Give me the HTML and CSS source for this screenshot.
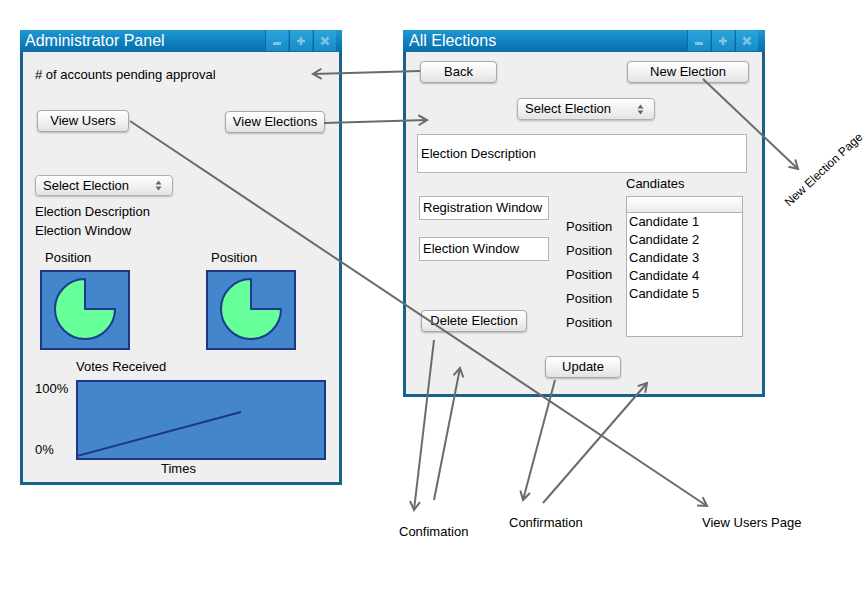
FILE: index.html
```html
<!DOCTYPE html>
<html>
<head>
<meta charset="utf-8">
<link rel="stylesheet" href="styles.css">
</head>
<body>
<div class="desk">
  <section class="win win-admin">
    <header class="titlebar">
      <span class="title">Administrator Panel</span>
      <div class="ctrls">
        <span class="ctrl"><svg width="10" height="10" viewBox="0 0 10 10"><rect x="1" y="6" width="8" height="3" fill="#7fc3e6"/></svg></span>
        <span class="ctrl"><svg width="10" height="10" viewBox="0 0 10 10"><path d="M1,5 H9 M5,1 V9" stroke="#7fc3e6" stroke-width="2.6"/></svg></span>
        <span class="ctrl"><svg width="10" height="10" viewBox="0 0 10 10"><path d="M1.5,1.5 L8.5,8.5 M8.5,1.5 L1.5,8.5" stroke="#7fc3e6" stroke-width="2.6"/></svg></span>
      </div>
    </header>
    <div class="body admin-body">
      <p class="pending"># of accounts pending approval</p>
      <div class="admin-btns">
        <button class="btn btn-users">View Users</button>
        <button class="btn btn-elections">View Elections</button>
      </div>
      <div class="select select-admin">
        <span>Select Election</span>
        <svg class="updown" width="7" height="11" viewBox="0 0 7 11"><path d="M3.5,0.5 L6.5,4.5 H0.5 Z M3.5,10.5 L6.5,6.5 H0.5 Z" fill="#666"/></svg>
      </div>
      <div class="info">
        <div>Election Description</div>
        <div>Election Window</div>
      </div>
      <div class="pies">
        <div class="pie-col">
          <div class="pie-label">Position</div>
          <div class="pie-box"><svg width="86" height="76" viewBox="0 0 86 76"><path d="M43,37 L43,7 A30,30 0 1,0 73,37 Z" fill="#66ff99" stroke="#1f3a8a" stroke-width="2" stroke-linejoin="round"/></svg></div>
        </div>
        <div class="pie-col">
          <div class="pie-label">Position</div>
          <div class="pie-box"><svg width="86" height="76" viewBox="0 0 86 76"><path d="M43,37 L43,7 A30,30 0 1,0 73,37 Z" fill="#66ff99" stroke="#1f3a8a" stroke-width="2" stroke-linejoin="round"/></svg></div>
        </div>
      </div>
      <div class="votes-title">Votes Received</div>
      <div class="chart-row">
        <div class="axis"><span>100%</span><span>0%</span></div>
        <div class="chart"><svg width="246" height="76" viewBox="0 0 246 76"><path d="M-1,74 L163,30" stroke="#1f3586" stroke-width="2"/></svg></div>
      </div>
      <div class="times">Times</div>
    </div>
  </section>

  <section class="win win-elections">
    <header class="titlebar">
      <span class="title">All Elections</span>
      <div class="ctrls">
        <span class="ctrl"><svg width="10" height="10" viewBox="0 0 10 10"><rect x="1" y="6" width="8" height="3" fill="#7fc3e6"/></svg></span>
        <span class="ctrl"><svg width="10" height="10" viewBox="0 0 10 10"><path d="M1,5 H9 M5,1 V9" stroke="#7fc3e6" stroke-width="2.6"/></svg></span>
        <span class="ctrl"><svg width="10" height="10" viewBox="0 0 10 10"><path d="M1.5,1.5 L8.5,8.5 M8.5,1.5 L1.5,8.5" stroke="#7fc3e6" stroke-width="2.6"/></svg></span>
      </div>
    </header>
    <div class="body el-body">
      <div class="el-btns">
        <button class="btn btn-back">Back</button>
        <button class="btn btn-new">New Election</button>
      </div>
      <div class="select select-el">
        <span>Select Election</span>
        <svg class="updown" width="7" height="11" viewBox="0 0 7 11"><path d="M3.5,0.5 L6.5,4.5 H0.5 Z M3.5,10.5 L6.5,6.5 H0.5 Z" fill="#666"/></svg>
      </div>
      <div class="field desc">Election Description</div>
      <div class="el-main">
        <div class="col-a">
          <div class="field small reg">Registration Window</div>
          <div class="field small win-field">Election Window</div>
          <button class="btn btn-delete">Delete Election</button>
        </div>
        <div class="col-b">
          <div>Position</div>
          <div>Position</div>
          <div>Position</div>
          <div>Position</div>
          <div>Position</div>
        </div>
        <div class="col-c">
          <div class="cand-title">Candiates</div>
          <div class="cand-list">
            <div class="cand-head"></div>
            <div class="cand">Candidate 1</div>
            <div class="cand">Candidate 2</div>
            <div class="cand">Candidate 3</div>
            <div class="cand">Candidate 4</div>
            <div class="cand">Candidate 5</div>
          </div>
        </div>
      </div>
      <button class="btn btn-update">Update</button>
    </div>
  </section>

  <svg class="arrows" width="868" height="607" viewBox="0 0 868 607">
    <defs>
      <marker id="ah" markerWidth="12" markerHeight="12" refX="10" refY="6" orient="auto" markerUnits="userSpaceOnUse">
        <path d="M1.5,1 L10,6 L1.5,11" fill="none" stroke="#6b6b6b" stroke-width="2"/>
      </marker>
    </defs>
    <g stroke="#6b6b6b" stroke-width="2" fill="none" marker-end="url(#ah)">
      <path d="M420,71 L313,74"/>
      <path d="M324,123 L427,120"/>
      <path d="M130,121 L707,506"/>
      <path d="M703,79 L798,169"/>
      <path d="M434,340 L414,510"/>
      <path d="M434,500 L460,368"/>
      <path d="M555,380 L523,500"/>
      <path d="M543,503 L647,383"/>
    </g>
  </svg>

  <span class="note note-conf1">Confimation</span>
  <span class="note note-conf2">Confirmation</span>
  <span class="note note-users">View Users Page</span>
  <span class="note note-new">New Election Page</span>
</div>
</body>
</html>
```

FILE: styles.css
```css
* { box-sizing: border-box; }

html, body {
  margin: 0;
  padding: 0;
  background: #ffffff;
}

body {
  font-family: "Liberation Sans", Arial, Helvetica, sans-serif;
  font-size: 13px;
  color: #000;
}

.desk {
  position: relative;
  width: 868px;
  height: 607px;
  padding: 30px 0 0 20px;
  display: flex;
  align-items: flex-start;
  gap: 61px;
  overflow: hidden;
}

.win {
  background: #efefef;
  border: 3px solid #17618a;
  border-top: none;
  display: flex;
  flex-direction: column;
}

.win-admin { width: 322px; height: 455px; }
.win-elections { width: 362px; height: 367px; }

.titlebar {
  height: 22px;
  margin: 0 -3px;
  background: linear-gradient(#1e98d4, #0f80bd 55%, #0b6ea5);
  display: flex;
  align-items: center;
  justify-content: space-between;
  padding: 0 0 0 5px;
  flex: none;
}

.title {
  color: #fff;
  font-size: 16px;
  line-height: 22px;
}

.win-elections .title { padding-left: 1px; }

.ctrls {
  display: flex;
  gap: 1px;
  align-self: stretch;
  padding: 0 6px 1px 0;
}
.win-elections .ctrls { padding-right: 7px; }

.ctrl {
  width: 23px;
  background: linear-gradient(#2aa3dc, #178dc8);
  border-left: 1px solid #0d6b9e;
  display: flex;
  align-items: center;
  justify-content: center;
}

.body { flex: 1; }

p { margin: 0; }

.btn {
  font-family: inherit;
  font-size: 13px;
  color: #000;
  height: 22px;
  padding: 0;
  border: 1px solid #a9a9a9;
  border-radius: 4px;
  background: linear-gradient(#ffffff, #f3f3f3 50%, #e2e2e2);
  box-shadow: 0 1px 2px rgba(0, 0, 0, 0.25);
  line-height: 20px;
  text-align: center;
  display: block;
}

.select {
  height: 22px;
  border: 1px solid #b0b0b0;
  border-radius: 4px;
  background: linear-gradient(#ffffff, #f2f2f2 50%, #e4e4e4);
  box-shadow: 0 1px 2px rgba(0, 0, 0, 0.22);
  display: flex;
  align-items: center;
  justify-content: space-between;
  padding: 0 10px 0 7px;
  line-height: 20px;
}

/* Admin window */
.admin-body { padding: 15px 12px 0 12px; }

.pending { line-height: 16px; }

.admin-btns {
  margin-top: 27px;
  padding: 0 2px;
  display: flex;
  justify-content: space-between;
  align-items: flex-start;
}
.btn-users { width: 92px; }
.btn-elections { width: 100px; margin-top: 1px; }

.select-admin { margin-top: 42px; width: 138px; height: 21px; }

.info { margin-top: 6px; line-height: 19px; }

.pies {
  margin-top: 10px;
  padding-left: 5px;
  display: grid;
  grid-template-columns: 90px 90px;
  column-gap: 76px;
}
.pie-label { line-height: 16px; padding-left: 5px; }
.pie-box {
  margin-top: 4px;
  width: 90px;
  height: 80px;
  background: #4386cb;
  border: 2px solid #1f3586;
}
.pie-box svg { display: block; }

.votes-title { margin-top: 9px; margin-left: 41px; line-height: 16px; }

.chart-row { margin-top: 5px; display: flex; }
.axis {
  width: 41px;
  height: 80px;
  display: flex;
  flex-direction: column;
  justify-content: space-between;
  line-height: 16px;
  padding: 1px 0 2px 0;
}
.chart {
  width: 250px;
  height: 80px;
  background: #4386cb;
  border: 2px solid #1f3586;
}
.chart svg { display: block; }

.times { margin-top: 1px; margin-left: 126px; line-height: 16px; }

/* Elections window */
.el-body { padding: 9px 12px 0 11px; }

.el-btns {
  display: flex;
  justify-content: space-between;
  padding: 0 1px 0 3px;
}
.btn-back { width: 77px; }
.btn-new { width: 122px; }

.select-el { margin-top: 15px; margin-left: 100px; width: 138px; }

.field {
  background: #fff;
  border: 1px solid #b5b5b5;
  line-height: 16px;
}
.desc {
  margin-top: 14px;
  height: 39px;
  width: 330px;
  padding: 11px 3px 0 3px;
}

.el-main { display: flex; align-items: flex-start; }

.col-a { width: 130px; margin-left: 2px; }
.field.small { height: 24px; padding: 3px 0 0 3px; }
.reg { margin-top: 23px; }
.win-field { margin-top: 17px; }
.btn-delete { margin-top: 49px; margin-left: 2px; width: 106px; }

.col-b {
  width: 60px;
  margin-left: 17px;
  padding-top: 42px;
  line-height: 24px;
}

.cand-title { margin-top: 3px; line-height: 16px; }
.cand-list {
  margin-top: 4px;
  width: 117px;
  height: 141px;
  background: #fff;
  border: 1px solid #b0b0b0;
}
.cand-head {
  height: 16px;
  background: linear-gradient(#ffffff, #ececec);
  border-bottom: 1px solid #b0b0b0;
}
.cand { line-height: 18px; padding-left: 2px; }

.btn-update { margin-top: 19px; margin-left: 128px; width: 76px; }

/* Annotations */
.arrows {
  position: absolute;
  left: 0;
  top: 0;
  pointer-events: none;
}

.note {
  position: absolute;
  font-size: 13px;
  line-height: 16px;
  white-space: nowrap;
}
.note-conf1 { left: 399px; top: 524px; }
.note-conf2 { left: 509px; top: 515px; }
.note-users { left: 702px; top: 515px; }
.note-new {
  left: 773px;
  top: 162px;
  width: 100px;
  text-align: center;
  font-size: 12px;
  transform: rotate(-43deg);
}
```
